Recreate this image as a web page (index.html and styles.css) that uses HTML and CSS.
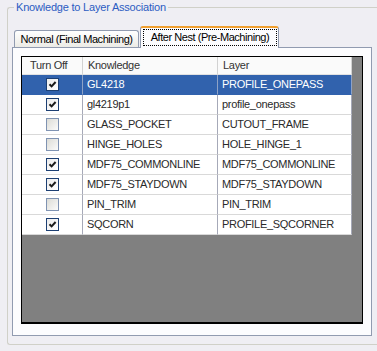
FILE: index.html
```html
<!DOCTYPE html>
<html lang="en">
<head>
    <meta charset="UTF-8">
    <title>Knowledge to Layer Association</title>
    <link rel="stylesheet" href="styles.css">
</head>
<body>
    <fieldset class="group">
        <legend>Knowledge to Layer Association</legend>
        <div class="tabs">
            <div class="tab">Normal (Final Machining)</div>
            <div class="tab active"><span class="focus">After Nest (Pre-Machining)</span></div>
        </div>
        <div class="panel">
            <div class="grid">
                <div class="row head">
                    <div class="cell c1">Turn Off</div>
                    <div class="cell">Knowledge</div>
                    <div class="cell">Layer</div>
                </div>
                <div class="row selected">
                    <div class="cell c1 mid"><span class="cb on"><svg viewBox="0 0 11 11"><path d="M2.5 5.2 L4.6 7.4 L8.6 3"/></svg></span></div>
                    <div class="cell">GL4218</div>
                    <div class="cell">PROFILE_ONEPASS</div>
                </div>
                <div class="row">
                    <div class="cell c1 mid"><span class="cb on"><svg viewBox="0 0 11 11"><path d="M2.5 5.2 L4.6 7.4 L8.6 3"/></svg></span></div>
                    <div class="cell">gl4219p1</div>
                    <div class="cell">profile_onepass</div>
                </div>
                <div class="row">
                    <div class="cell c1 mid"><span class="cb"></span></div>
                    <div class="cell">GLASS_POCKET</div>
                    <div class="cell">CUTOUT_FRAME</div>
                </div>
                <div class="row">
                    <div class="cell c1 mid"><span class="cb"></span></div>
                    <div class="cell">HINGE_HOLES</div>
                    <div class="cell">HOLE_HINGE_1</div>
                </div>
                <div class="row">
                    <div class="cell c1 mid"><span class="cb on"><svg viewBox="0 0 11 11"><path d="M2.5 5.2 L4.6 7.4 L8.6 3"/></svg></span></div>
                    <div class="cell">MDF75_COMMONLINE</div>
                    <div class="cell">MDF75_COMMONLINE</div>
                </div>
                <div class="row">
                    <div class="cell c1 mid"><span class="cb on"><svg viewBox="0 0 11 11"><path d="M2.5 5.2 L4.6 7.4 L8.6 3"/></svg></span></div>
                    <div class="cell">MDF75_STAYDOWN</div>
                    <div class="cell">MDF75_STAYDOWN</div>
                </div>
                <div class="row">
                    <div class="cell c1 mid"><span class="cb"></span></div>
                    <div class="cell">PIN_TRIM</div>
                    <div class="cell">PIN_TRIM</div>
                </div>
                <div class="row">
                    <div class="cell c1 mid"><span class="cb on"><svg viewBox="0 0 11 11"><path d="M2.5 5.2 L4.6 7.4 L8.6 3"/></svg></span></div>
                    <div class="cell">SQCORN</div>
                    <div class="cell">PROFILE_SQCORNER</div>
                </div>
            </div>
        </div>
    </fieldset>
</body>
</html>
```
FILE: styles.css
```css
/* page */
* { box-sizing: border-box; }
html, body {
    margin: 0;
    padding: 0;
    font-family: "Liberation Sans", Arial, sans-serif;
    font-size: 11px;
    background-color: #efeef3;
    overflow: hidden;
}
/* group box (runs on past the right edge of the window) */
.group {
    margin: 1px 0 0 7px;
    padding: 0 0 0 4px;
    height: 344px;
    border: 1px solid #d0d0c8;
    border-right: none;
    border-radius: 3px 0 0 3px;
}
.group legend {
    margin-left: 2px;
    padding: 0 2px;
    line-height: 13px;
    letter-spacing: -0.2px;
    color: #2b5cc2;
}
/* tabs */
.tabs {
    display: flex;
    align-items: flex-end;
    gap: 1px;
    height: 22px;
    margin-top: 11px;
    padding-left: 2px;
}
.tab {
    width: 125px;
    height: 17px;
    line-height: 16px;
    text-align: center;
    letter-spacing: -0.45px;
    border: 1px solid #919bb0;
    border-bottom: none;
    border-radius: 3px 3px 0 0;
    background: linear-gradient(#ffffff, #ecebe6);
    color: #000;
    white-space: nowrap;
}
.tab.active {
    position: relative;
    z-index: 1;
    width: 139px;
    height: 22px;
    margin-bottom: -1px;
    padding: 1px 1px 0 2px;
    border-top: 2px solid #f0a030;
    background: #fcfcfe;
}
.tab .focus {
    display: block;
    line-height: 15px;
    border: 1px dotted #000;
}
/* tab page */
.panel {
    display: flex;
    width: 360px;
    height: 289px;
    padding: 8px 8px 11px 8px;
    border: 1px solid #919bb0;
    background-color: #fcfcfe;
}
/* data grid */
.grid {
    flex: 1;
    border: 1px solid #000;
    border-bottom-width: 2px;
    background-color: #808080;
}
.row {
    display: grid;
    grid-template-columns: 61px 135px 134px;
    height: 20px;
    color: #2a2a2a;
    letter-spacing: -0.3px;
}
.row .cell {
    padding-left: 4px;
    line-height: 19px;
    border-right: 1px solid #a6a9b8;
    border-bottom: 1px solid #d9d9d9;
    background-color: #fff;
    white-space: nowrap;
    overflow: hidden;
}
.row .mid {
    display: flex;
    align-items: center;
    justify-content: center;
    padding-left: 0;
}
.row.head {
    height: 18px;
    color: #333;
}
.row.head .cell {
    line-height: 17px;
    padding-left: 5px;
    background-color: #fafafa;
    border-right: 1px solid #d2d2d2;
    border-bottom: 1px solid #e2e2e2;
}
.row.head .c1 { padding-left: 8px; }
.row.selected .cell {
    background-color: #3162ad;
    color: #fff;
    border-right-color: #8ea2c6;
    border-bottom-color: #3162ad;
}
/* check boxes */
.cb {
    display: block;
    width: 13px;
    height: 13px;
    margin-top: -1px;
    border: 1px solid #7f93b2;
    background: linear-gradient(135deg, #dcdcd6, #fbfbfb);
}
.cb.on {
    border-color: #1c3f73;
    background: linear-gradient(135deg, #ececec, #ffffff);
}
.cb svg {
    display: block;
    width: 11px;
    height: 11px;
}
.cb path {
    fill: none;
    stroke: #1a1a1a;
    stroke-width: 2;
}
```
